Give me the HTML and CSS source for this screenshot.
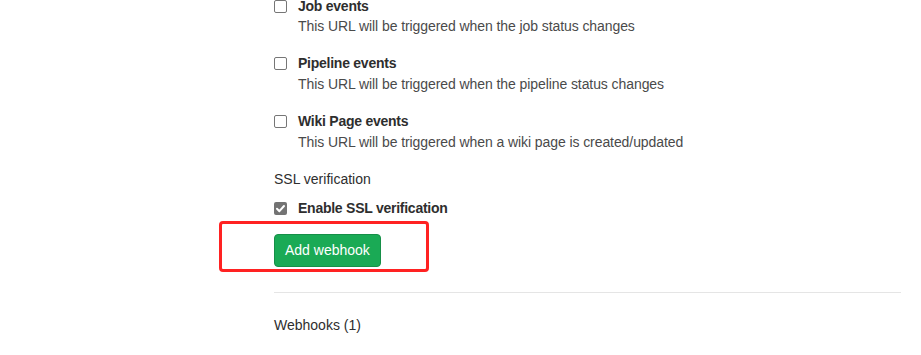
FILE: index.html
```html
<!DOCTYPE html>
<html lang="en">
<head>
<meta charset="utf-8">
<title>Webhooks</title>
<link rel="stylesheet" href="styles.css">
</head>
<body>
<div class="page">
  <div class="events">
    <div class="event">
      <div class="check-row">
        <span class="checkbox"></span>
        <span class="label">Job events</span>
      </div>
      <p class="help">This URL will be triggered when the job status changes</p>
    </div>
    <div class="event">
      <div class="check-row">
        <span class="checkbox"></span>
        <span class="label">Pipeline events</span>
      </div>
      <p class="help">This URL will be triggered when the pipeline status changes</p>
    </div>
    <div class="event">
      <div class="check-row">
        <span class="checkbox"></span>
        <span class="label">Wiki Page events</span>
      </div>
      <p class="help">This URL will be triggered when a wiki page is created/updated</p>
    </div>
  </div>
  <div class="ssl-title">SSL verification</div>
  <div class="check-row ssl-row">
    <span class="checkbox checked">
      <svg viewBox="0 0 13 13" width="13" height="13"><path d="M3 6.8 L5.4 9.2 L10 4" fill="none" stroke="#fff" stroke-width="2" stroke-linecap="round" stroke-linejoin="round"/></svg>
    </span>
    <span class="label">Enable SSL verification</span>
  </div>
  <div class="actions">
    <span class="highlight"><button class="btn-add" type="button">Add webhook</button></span>
  </div>
  <hr class="divider">
  <div class="list-title">Webhooks (1)</div>
</div>
</body>
</html>
```

FILE: styles.css
```css
html, body {
  margin: 0;
  padding: 0;
  background: #fff;
}
body {
  font-family: "Liberation Sans", Arial, sans-serif;
  font-size: 14px;
  line-height: 20px;
  color: #2e2e2e;
  overflow: hidden;
}
.page {
  padding: 0 20px 0 274px;
}
.events {
  margin-top: -4px;
}
.event {
  margin-bottom: 17px;
}
.event:first-child .check-row {
  margin-bottom: 0;
}
.check-row {
  display: flex;
  align-items: center;
  gap: 11px;
  height: 20px;
}
.checkbox {
  box-sizing: border-box;
  width: 13px;
  height: 13px;
  border: 1px solid #767676;
  border-radius: 2px;
  background: #fff;
  flex: none;
  display: flex;
  align-items: center;
  justify-content: center;
}
.checkbox.checked {
  border: none;
  background: #737373;
}
.checkbox svg {
  display: block;
}
.label {
  font-weight: bold;
  color: #2e2e2e;
  letter-spacing: -0.25px;
}
.help {
  margin: 1px 0 0 0;
  padding-left: 24px;
  color: #4a4a4a;
  letter-spacing: -0.08px;
}
.event:first-child .help {
  margin-top: 0;
}
.ssl-title {
  color: #2e2e2e;
}
.ssl-row {
  margin-top: 9px;
}
.actions {
  margin-top: 16px;
  display: flex;
}
.highlight {
  position: relative;
  display: inline-flex;
}
.highlight::after {
  content: "";
  position: absolute;
  left: -55px;
  top: -13px;
  width: 210px;
  height: 51px;
  box-sizing: border-box;
  border: 3px solid #ff2222;
  border-radius: 4px;
  pointer-events: none;
}
.btn-add {
  font-family: inherit;
  font-size: 14px;
  line-height: 19px;
  padding: 6px 10px;
  color: #fff;
  background: #1aaa55;
  border: 1px solid #168f48;
  border-radius: 4px;
  cursor: pointer;
}
.divider {
  margin: 25px 0 0 0;
  border: 0;
  border-top: 1px solid #e5e5e5;
  height: 0;
}
.list-title {
  margin-top: 22px;
  color: #2e2e2e;
}
```
